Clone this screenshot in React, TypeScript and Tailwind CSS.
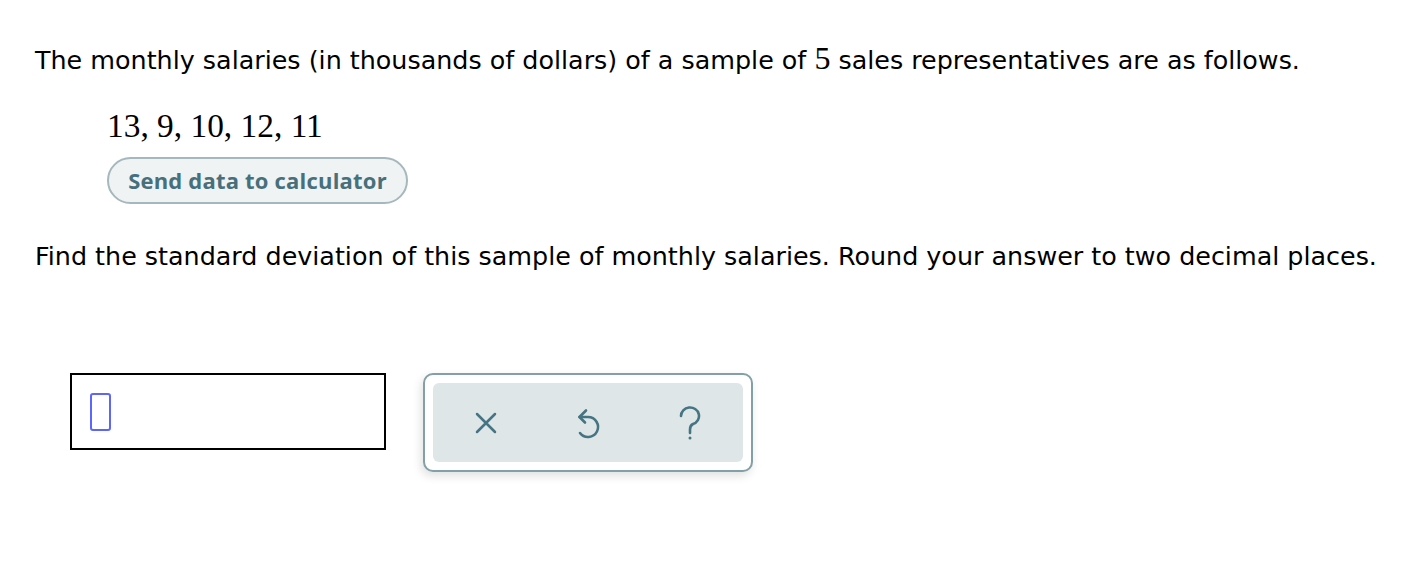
import React from "react";

const ToolIcon = ({ children }: { children: React.ReactNode }) => (
  <button className="flex h-[40px] w-[40px] items-center justify-center text-[#457482]">
    {children}
  </button>
);

export default function App() {
  return (
    <div className="min-h-[562px] w-[1420px] bg-white text-black">
      <div className="pl-[35px] pt-[42px]">
        <p className="font-['DejaVu_Sans',Verdana,sans-serif] text-[25.4px] leading-[32px]">
          The monthly salaries (in thousands of dollars) of a sample of{" "}
          <span className="font-['Liberation_Serif',serif] text-[32px]">5</span>{" "}
          sales representatives are as follows.
        </p>

        <div className="ml-[72px] mt-[32px] font-['Liberation_Serif',serif] text-[33.4px] leading-[36px]">
          13, 9, 10, 12, 11
        </div>

        <button className="ml-[72px] mt-[13px] flex h-[47px] w-[301px] items-center justify-center rounded-full border-2 border-[#a5b8bd] bg-[#eff3f4] font-['Open_Sans',sans-serif] text-[22px] font-bold tracking-[0.2px] text-[#47707b]">
          Send data to calculator
        </button>

        <p className="mt-[36px] font-['DejaVu_Sans',Verdana,sans-serif] text-[25.4px] leading-[32px]">
          Find the standard deviation of this sample of monthly salaries. Round
          your answer to two decimal places.
        </p>

        <div className="ml-[35px] mt-[101px] flex items-start gap-[37px]">
          <div className="flex h-[77px] w-[316px] items-center border-2 border-black pl-[18px]">
            <span className="block h-[38px] w-[21px] rounded-[3px] border-2 border-[#5a66ff]" />
          </div>

          <div className="rounded-[10px] border-2 border-[#84a0a7] bg-white p-[8px] shadow-[-2px_4px_10px_rgba(0,0,0,0.12)]">
            <div className="flex h-[79px] w-[310px] items-center justify-center gap-[62px] rounded-[6px] bg-[#dfe6e8]">
              <ToolIcon>
                <svg width="22" height="22" viewBox="0 0 22 22" fill="none" stroke="currentColor" strokeWidth="2.5" strokeLinecap="round">
                  <path d="M2 2 L20 20 M20 2 L2 20" />
                </svg>
              </ToolIcon>
              <ToolIcon>
                <svg width="28" height="32" viewBox="0 0 28 32" fill="none" stroke="currentColor" strokeWidth="2.6" strokeLinecap="round" strokeLinejoin="round">
                  <path d="M12 3.5 L5.5 10 L11 15.5" />
                  <path d="M5.5 10 H14 A10 10 0 1 1 6 26" />
                </svg>
              </ToolIcon>
              <ToolIcon>
                <svg width="24" height="34" viewBox="0 0 24 34" fill="none" stroke="currentColor" strokeWidth="2.6" strokeLinecap="round">
                  <path d="M3 10 A9 8.5 0 1 1 15 18 Q12 19.5 12 23.5 V27" />
                  <circle cx="12" cy="32" r="1.5" fill="currentColor" stroke="none" />
                </svg>
              </ToolIcon>
            </div>
          </div>
        </div>
      </div>
    </div>
  );
}
